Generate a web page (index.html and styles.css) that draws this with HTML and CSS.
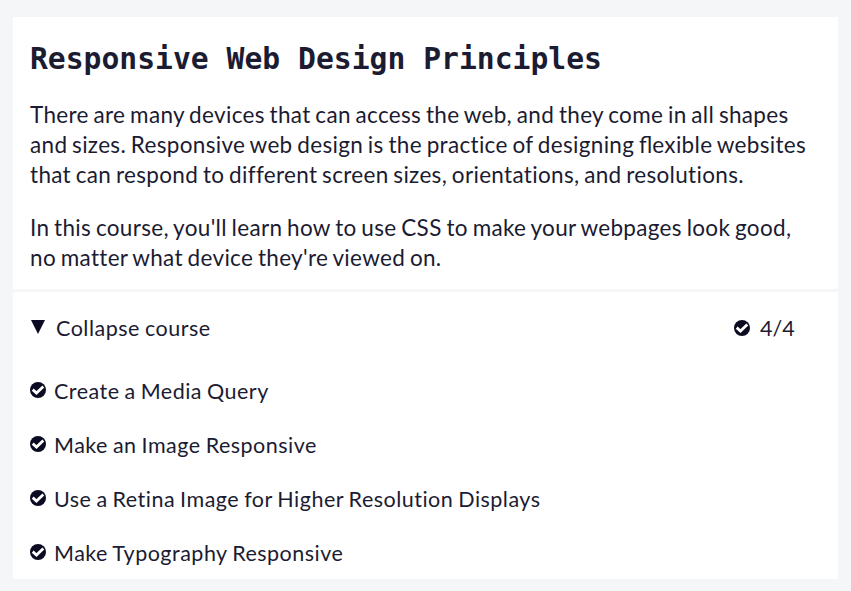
FILE: index.html
```html
<!DOCTYPE html>
<html lang="en">
<head>
<meta charset="utf-8">
<title>Responsive Web Design Principles</title>
<link rel="stylesheet" href="styles.css">
</head>
<body>
<svg class="defs" width="0" height="0"><symbol id="check" viewBox="0 0 16 16"><circle cx="8" cy="8" r="8"/><path class="tick" d="M2.7 7.6 6.5 11 13.3 4.6"/></symbol></svg>
<main class="block">
<section class="intro">
<h1>Responsive Web Design Principles</h1>
<p>There are many devices that can access the web, and they come in all shapes<br>and sizes. Responsive web design is the practice of designing <span class="lig">fl</span>exible websites<br>that can respond to different screen sizes, orientations, and resolutions.</p>
<p>In this course, you'll learn how to use CSS to make your webpages look good,<br>no matter what device they're viewed on.</p>
</section>
<section class="course">
<div class="toggle"><svg class="caret" viewBox="0 0 14 14"><path d="M0 0H14L7 14Z"/></svg><span class="label">Collapse course</span><svg class="check"><use href="#check"/></svg><span class="count">4/4</span></div>
<ul>
<li><svg class="check"><use href="#check"/></svg><span>Create a Media Query</span></li>
<li><svg class="check"><use href="#check"/></svg><span>Make an Image Responsive</span></li>
<li><svg class="check"><use href="#check"/></svg><span>Use a Retina Image for Higher Resolution Displays</span></li>
<li><svg class="check"><use href="#check"/></svg><span>Make Typography Responsive</span></li>
</ul>
</section>
</main>
</body>
</html>
```
FILE: styles.css
```css
* { box-sizing: border-box; }
body { margin: 0; height: 591px; overflow: hidden; background: #f5f6f7; color: #1b1b32; font: 22.5px/30px Lato, sans-serif; }
.defs { position: absolute; }
.block { margin: 17px 13px 12px; }
.intro { height: 272px; padding: 24px 17px 0; background: #fff; }
h1 { margin: 0; font: bold 29.7px/36px "DejaVu Sans Mono", monospace; white-space: nowrap; }
p { margin: 23px 0 0; white-space: nowrap; letter-spacing: 0.32px; word-spacing: -1.3px; }
.lig { letter-spacing: 0; }
.course { height: 287px; margin-top: 3px; background: #fff; padding: 9px 17px 0; }
.toggle { display: flex; align-items: center; height: 54px; font-size: 21.5px; }
.caret { width: 14px; height: 14px; margin: 0 11px 2px 1px; fill: #0a0a23; }
.label { flex: 1; letter-spacing: 0.5px; word-spacing: -1px; }
.check { width: 16px; height: 16px; fill: #0a0a23; flex: none; }
.tick { fill: none; stroke: #fff; stroke-width: 2.8; }
.count { width: 61px; margin-left: 10px; }
ul { list-style: none; margin: 9px 0 0; padding: 0; }
li { display: flex; align-items: center; height: 54px; font-size: 21.5px; gap: 8px; letter-spacing: 0.49px; word-spacing: -1px; }
li .check { margin-bottom: 2px; }
```
